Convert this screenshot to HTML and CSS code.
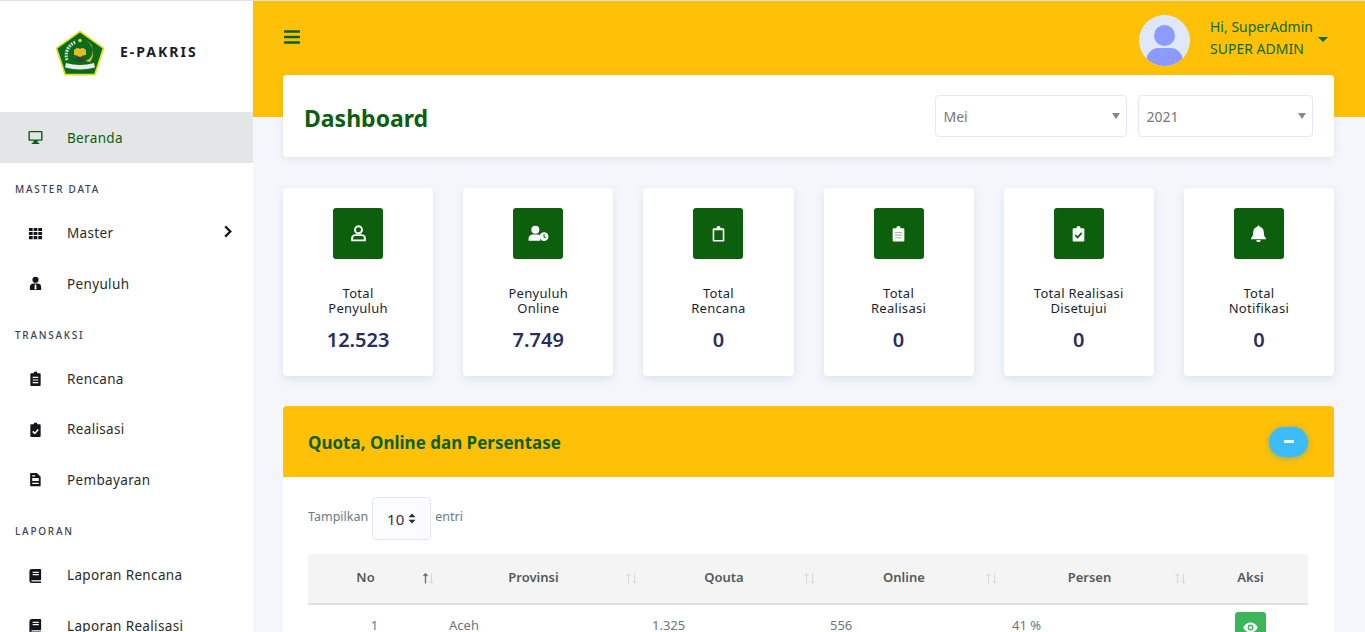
FILE: index.html
```html
<!DOCTYPE html>
<html lang="id">
<head>
<meta charset="utf-8">
<title>E-PAKRIS</title>
<link rel="stylesheet" href="styles.css">
</head>
<body>
<div class="app">
  <aside class="sidebar">
    <div class="brand">
      <svg class="logo" viewBox="0 0 50 46">
        <path d="M25 0.500 L49.500 18 L40.500 45.500 L9.500 45.500 L0.500 18 Z" fill="#e9dc20"/>
        <path d="M25 2.500 L47.500 18.600 L39.200 43.800 L10.800 43.800 L2.500 18.600 Z" fill="#0a6b1c"/>
        <path d="M31 10.500 A14.500 14.500 0 0 1 35 32 L30.500 31 A11 11 0 0 0 31 10.500 Z" fill="#d9bd2c"/>
        <circle cx="25" cy="10.500" r="1.800" fill="#e9dc20"/>
        <path d="M12 30 A14 14 0 0 1 21 12" fill="none" stroke="#cfe3d0" stroke-width="3.200" stroke-dasharray="1.800 1"/>
        <path d="M19 20 Q22 16.500 25 19 Q28 16.500 31 20 L31 25 Q27 25 25 28 Q23 25 19 25 Z" fill="#e8b92a"/>
        <path d="M19 30 L25 26.500 L31 30 L25 32 Z" fill="#2c4a32"/>
        <path d="M11 33 Q25 37 39 33 L40 37.500 Q25 41.500 10 37.500 Z" fill="#e6ece6"/>
      </svg>
      <span class="brand-name">E-PAKRIS</span>
    </div>
    <nav>
      <a class="item active">
        <svg class="ic" viewBox="0 0 16 16"><path d="M1.500 1h13a1 1 0 0 1 1 1v8.500a1 1 0 0 1-1 1h-13a1 1 0 0 1-1-1V2a1 1 0 0 1 1-1zm.5 1.500V10h12V2.500zM6 11.500h4l.5 2H12V15H4v-1.500h1.500z" fill="#0c5f0c" fill-rule="evenodd"/></svg>
        <span>Beranda</span>
      </a>
      <div class="section">MASTER DATA</div>
      <a class="item">
        <svg class="ic" viewBox="0 0 16 16"><path d="M1 2h4v3.400H1zM6 2h4v3.400H6zM11 2h4v3.400h-4zM1 6.300h4v3.400H1zM6 6.300h4v3.400H6zM11 6.300h4v3.400h-4zM1 10.600h4V14H1zM6 10.600h4V14H6zM11 10.600h4V14h-4z" fill="#14141c"/></svg>
        <span>Master</span>
        <svg class="chev" viewBox="0 0 10 14"><path d="M2 1.500 L7.500 7 L2 12.500" fill="none" stroke="#14141c" stroke-width="2.400"/></svg>
      </a>
      <a class="item">
        <svg class="ic" viewBox="0 0 16 16"><circle cx="8" cy="4" r="3.300" fill="#14141c"/><path d="M2 15v-3a4 4 0 0 1 4-4h4a4 4 0 0 1 4 4v3zM7.300 9l-.5 5h2.400l-.5-5z" fill="#14141c" fill-rule="evenodd"/></svg>
        <span>Penyuluh</span>
      </a>
      <div class="section">TRANSAKSI</div>
      <a class="item">
        <svg class="ic" viewBox="0 0 16 16"><path d="M3.500 2.500H6a2 2 0 0 1 4 0h2.500a1 1 0 0 1 1 1V15a1 1 0 0 1-1 1h-9a1 1 0 0 1-1-1V3.500a1 1 0 0 1 1-1zM5 6.200v1.200h6V6.200zM5 9v1.200h6V9zM5 11.800V13h6v-1.200z" fill="#14141c" fill-rule="evenodd"/></svg>
        <span>Rencana</span>
      </a>
      <a class="item">
        <svg class="ic" viewBox="0 0 16 16"><path d="M3.500 2.500H6a2 2 0 0 1 4 0h2.500a1 1 0 0 1 1 1V15a1 1 0 0 1-1 1h-9a1 1 0 0 1-1-1V3.500a1 1 0 0 1 1-1z" fill="#14141c"/><path d="M5 10l2.200 2.200L11 8" fill="none" stroke="#fff" stroke-width="1.700"/></svg>
        <span>Realisasi</span>
      </a>
      <a class="item">
        <svg class="ic" viewBox="0 0 16 16"><path d="M3 1h6.500L13.500 5v9.500a.7.700 0 0 1-.7.7H3a.7.700 0 0 1-.7-.7V1.700A.7.700 0 0 1 3 1zM4.500 3.500v1.200h3V3.500zM4.500 6.500v3.200h7V6.500zM4.500 11.500v1.400h7v-1.400z" fill="#14141c" fill-rule="evenodd"/></svg>
        <span>Pembayaran</span>
      </a>
      <div class="section">LAPORAN</div>
      <a class="item">
        <svg class="ic" viewBox="0 0 16 16"><path d="M4 1h9a1 1 0 0 1 1 1v10a1 1 0 0 1-1 1H4a.9.900 0 0 0 0 1.500h10V16H4a2.500 2.500 0 0 1-2.500-2.500v-10A2.500 2.500 0 0 1 4 1zM5 4v1.200h6.500V4zM5 6.500v1.200h6.500V6.500z" fill="#14141c" fill-rule="evenodd"/></svg>
        <span>Laporan Rencana</span>
      </a>
      <a class="item">
        <svg class="ic" viewBox="0 0 16 16"><path d="M4 1h9a1 1 0 0 1 1 1v10a1 1 0 0 1-1 1H4a.9.900 0 0 0 0 1.500h10V16H4a2.500 2.500 0 0 1-2.500-2.500v-10A2.500 2.500 0 0 1 4 1zM5 4v1.200h6.500V4zM5 6.500v1.200h6.500V6.500z" fill="#14141c" fill-rule="evenodd"/></svg>
        <span>Laporan Realisasi</span>
      </a>
    </nav>
  </aside>

  <main class="main">
    <header class="topbar">
      <svg class="burger" viewBox="0 0 16 14"><path d="M1 1.500h14M1 7h14M1 12.500h14" stroke="#0c5f0c" stroke-width="2.600" stroke-linecap="round"/></svg>
      <div class="user">
        <svg class="avatar" viewBox="0 0 51 51">
          <circle cx="25.500" cy="25.500" r="25.500" fill="#dfe8fb"/>
          <circle cx="25.500" cy="20.500" r="10.500" fill="#8b9bff"/>
          <path d="M7.500 43.500 A12 12 0 0 1 19 33 H32 A12 12 0 0 1 43.500 43.500 A25.500 25.500 0 0 1 7.500 43.500 Z" fill="#8b9bff"/>
        </svg>
        <div class="user-text">
          <div>Hi, SuperAdmin</div>
          <div>SUPER ADMIN</div>
        </div>
        <span class="caret"></span>
      </div>
    </header>

    <section class="title-card">
      <h1>Dashboard</h1>
      <div class="filters">
        <div class="fake-select month">Mei<span class="sel-arrow"></span></div>
        <div class="fake-select year">2021<span class="sel-arrow"></span></div>
      </div>
    </section>

    <section class="stats">
      <article class="stat">
        <div class="stat-icon"><svg viewBox="0 0 16 16"><circle cx="8" cy="4.500" r="3.300" fill="none" stroke="#fff" stroke-width="1.800"/><path d="M2 14.500v-2a3 3 0 0 1 3-3h6a3 3 0 0 1 3 3v2z" fill="none" stroke="#fff" stroke-width="1.800"/></svg></div>
        <div class="stat-label">Total<br>Penyuluh</div>
        <div class="stat-value">12.523</div>
      </article>
      <article class="stat">
        <div class="stat-icon"><svg class="wide" viewBox="0 0 20 16"><circle cx="7" cy="4.500" r="3.800" fill="#fff"/><path d="M0.500 15v-2a4 4 0 0 1 4-4h5a4 4 0 0 1 2.500 1A5 5 0 0 0 11.800 15z" fill="#fff"/><circle cx="15.300" cy="11" r="4.200" fill="#fff"/><path d="M15.300 8.800V11.200L17 12" stroke="#0c5f0c" stroke-width="1" fill="none"/></svg></div>
        <div class="stat-label">Penyuluh<br>Online</div>
        <div class="stat-value">7.749</div>
      </article>
      <article class="stat">
        <div class="stat-icon"><svg viewBox="0 0 16 16"><path d="M3.500 3H6a2 2 0 0 1 4 0h2.500a1 1 0 0 1 1 1v10.500a1 1 0 0 1-1 1h-9a1 1 0 0 1-1-1V4a1 1 0 0 1 1-1zM4 5v9h8V5z" fill="#fff" fill-rule="evenodd"/></svg></div>
        <div class="stat-label">Total<br>Rencana</div>
        <div class="stat-value">0</div>
      </article>
      <article class="stat">
        <div class="stat-icon"><svg viewBox="0 0 16 16"><path d="M3.500 3H6a2 2 0 0 1 4 0h2.500a1 1 0 0 1 1 1v10.500a1 1 0 0 1-1 1h-9a1 1 0 0 1-1-1V4a1 1 0 0 1 1-1z" fill="#fff"/><path d="M4.500 7h7M4.500 9.500h7M4.500 12h7" stroke="#9cc09c" stroke-width="1"/></svg></div>
        <div class="stat-label">Total<br>Realisasi</div>
        <div class="stat-value">0</div>
      </article>
      <article class="stat">
        <div class="stat-icon"><svg viewBox="0 0 16 16"><path d="M3.500 3H6a2 2 0 0 1 4 0h2.500a1 1 0 0 1 1 1v10.500a1 1 0 0 1-1 1h-9a1 1 0 0 1-1-1V4a1 1 0 0 1 1-1z" fill="#fff"/><path d="M5 9.500l2.200 2.200L11 7.500" fill="none" stroke="#0c5f0c" stroke-width="1.700"/></svg></div>
        <div class="stat-label">Total Realisasi<br>Disetujui</div>
        <div class="stat-value">0</div>
      </article>
      <article class="stat">
        <div class="stat-icon"><svg viewBox="0 0 16 16"><path d="M8 .5a1.100 1.100 0 0 1 1.100 1.200C11.500 2.200 13 4.200 13 7c0 3 .8 4 2 5.300v1H1v-1C2.200 11 3 10 3 7c0-2.800 1.500-4.800 3.900-5.300A1.100 1.100 0 0 1 8 .5zM6 14.200h4a2 2 0 0 1-4 0z" fill="#fff"/></svg></div>
        <div class="stat-label">Total<br>Notifikasi</div>
        <div class="stat-value">0</div>
      </article>
    </section>

    <section class="panel">
      <div class="panel-head">
        <h2>Quota, Online dan Persentase</h2>
        <button class="collapse" type="button"><span class="minus"></span></button>
      </div>
      <div class="panel-body">
        <div class="length">
          <span>Tampilkan</span>
          <div class="len-select">10
            <svg viewBox="0 0 10 14"><path d="M5 .5 9.500 5.500H.5zM5 13.500.5 8.500h9z" fill="#2a2d35"/></svg>
          </div>
          <span>entri</span>
        </div>
        <table>
          <thead>
            <tr>
              <th class="c-no">No<svg class="sort on" viewBox="0 0 13 11"><path class="up" d="M3.500 10.500V1M1.500 3 3.500 .8 5.500 3"/><path d="M9.500 .5V10M7.500 8 9.500 10.200 11.500 8"/></svg></th>
              <th class="c-prov">Provinsi<svg class="sort" viewBox="0 0 13 11"><path d="M3.500 10.500V1M1.500 3 3.500 .8 5.500 3"/><path d="M9.500 .5V10M7.500 8 9.500 10.200 11.500 8"/></svg></th>
              <th class="c-quota">Qouta<svg class="sort" viewBox="0 0 13 11"><path d="M3.500 10.500V1M1.500 3 3.500 .8 5.500 3"/><path d="M9.500 .5V10M7.500 8 9.500 10.200 11.500 8"/></svg></th>
              <th class="c-online">Online<svg class="sort" viewBox="0 0 13 11"><path d="M3.500 10.500V1M1.500 3 3.500 .8 5.500 3"/><path d="M9.500 .5V10M7.500 8 9.500 10.200 11.500 8"/></svg></th>
              <th class="c-persen">Persen<svg class="sort" viewBox="0 0 13 11"><path d="M3.500 10.500V1M1.500 3 3.500 .8 5.500 3"/><path d="M9.500 .5V10M7.500 8 9.500 10.200 11.500 8"/></svg></th>
              <th class="c-aksi">Aksi</th>
            </tr>
          </thead>
          <tbody>
            <tr>
              <td class="center">1</td>
              <td>Aceh</td>
              <td>1.325</td>
              <td>556</td>
              <td>41 %</td>
              <td class="center">
                <a class="eye"><svg viewBox="0 0 18 12"><path d="M9 0C5 0 2 2.500 .3 6 2 9.500 5 12 9 12s7-2.500 8.700-6C16 2.500 13 0 9 0zm0 2.500a3.500 3.500 0 1 1 0 7 3.500 3.500 0 0 1 0-7z" fill="#fff" fill-rule="evenodd"/><circle cx="9" cy="6" r="1.800" fill="#fff"/></svg></a>
              </td>
            </tr>
          </tbody>
        </table>
      </div>
    </section>
  </main>
</div>
</body>
</html>
```
FILE: styles.css
```css
* { box-sizing: border-box; }
html, body { margin: 0; height: 632px; overflow: hidden; }
body {
  font-family: "Noto Sans", "Open Sans", sans-serif;
  background: #f4f6fb;
  color: #212529;
  border-top: 1px solid #dfe1e5;
}
.app { display: flex; height: 631px; overflow: hidden; }

.sidebar { width: 253px; flex: none; background: #fff; }
.brand { height: 111px; display: flex; align-items: center; padding: 0 0 8px 55px; }
.logo { width: 50px; height: 46px; }
.brand-name { margin-left: 15px; font-size: 14px; font-weight: 700; letter-spacing: 2px; color: #1a1c2e; margin-top: -2px; }

.item { display: flex; align-items: center; height: 50.400px; padding-left: 28px; font-size: 13.500px; letter-spacing: .35px; color: #2b2b2b; }
.item span { margin-left: 24px; }
.item.active { background: #e4e5e6; color: #0c5f0c; height: 51px; }
.ic { width: 15px; height: 15px; flex: none; }
.chev { width: 10px; height: 13px; margin-left: auto; margin-right: 20px; margin-top: -3px; }
.section { height: 45px; padding: 20px 0 0 15px; font-size: 10px; line-height: 12px; font-weight: 500; letter-spacing: 1.750px; color: #3c3f58; }

.main { flex: 1; min-width: 0; position: relative; }
.topbar { height: 116px; background: #ffc107; padding: 0 30px 0 31px; margin-bottom: -42px; display: flex; justify-content: space-between; align-items: flex-start; }
.burger { width: 16px; height: 14px; margin-top: 29px; }
.user { display: flex; align-items: flex-start; margin-top: 14px; color: #0c6a0c; font-size: 14px; }
.avatar { width: 51px; height: 51px; }
.user-text { margin-left: 20px; line-height: 21.500px; margin-top: 1px; width: 108px; white-space: nowrap; }
.caret { margin: 22px 7px 0 0; border: 5px solid transparent; border-top-color: #0c6a0c; border-bottom: 0; }

.title-card { margin: 0 31.500px 0 30px; height: 82px; background: #fff; border-radius: 4px; box-shadow: 0 2px 8px rgba(70,80,120,.1); display: flex; justify-content: space-between; align-items: center; padding: 0 21px 0 21px; position: relative; }
h1 { margin: 3px 0 0; font-size: 23px; font-weight: 700; color: #0c5f0c; }
.filters { display: flex; gap: 11px; }
.fake-select { height: 42px; border: 1px solid #e3e6fb; border-radius: 4px; display: flex; align-items: center; padding-left: 8px; font-size: 14px; color: #777; position: relative; background: #fff; }
.month { width: 192px; }
.year { width: 175px; }
.sel-arrow { margin-left: auto; margin-right: 6px; border: 5px solid transparent; border-top: 6px solid #888; border-bottom: 0; border-left-width: 4px; border-right-width: 4px; }

.stats { display: grid; grid-template-columns: repeat(6, 1fr); gap: 30px; margin: 31px 31px 30px 30px; }
.stat { height: 188px; background: #fff; border-radius: 4px; box-shadow: 0 3px 8px rgba(70,80,120,.12); display: flex; flex-direction: column; align-items: center; padding-top: 20px; }
.stat-icon { width: 50px; height: 51px; background: #0c5f0c; border-radius: 3px; display: flex; align-items: center; justify-content: center; }
.stat-icon svg { width: 17px; height: 17px; }
.stat-icon svg.wide { width: 21px; height: 17px; }
.stat-label { margin-top: 26.700px; font-size: 13px; line-height: 15.500px; letter-spacing: .3px; text-align: center; color: #1c1f33; white-space: nowrap; }
.stat-value { margin-top: 9.200px; font-size: 20px; line-height: 28px; font-weight: 600; color: #2a2f5b; }

.panel { margin: 0 31.500px 0 30px; background: #fff; border-radius: 4px 4px 0 0; }
.panel-head { height: 71px; background: #ffc107; border-radius: 4px 4px 0 0; display: flex; justify-content: space-between; align-items: center; padding: 0 25.500px 0 25px; }
h2 { margin: 2px 0 0; font-size: 17px; font-weight: 700; color: #0c5f0c; }
.collapse { width: 39px; height: 30px; border: 0; border-radius: 15px; background: #3bbcf8; box-shadow: 0 1px 6px rgba(60,160,210,.6); display: flex; align-items: center; justify-content: center; padding: 0; }
.minus { width: 10px; height: 3px; background: #fff; border-radius: 1px; }
.panel-body { padding: 20px 25px 0; }
.length { display: flex; align-items: center; gap: 4px; font-size: 12.500px; color: #6c7a89; height: 43px; margin-bottom: 14px; }
.length span { margin-top: -4px; }
.len-select { width: 59px; height: 43px; border: 1px solid #e3e6fb; border-radius: 4px; background: #fcfcff; display: flex; align-items: center; justify-content: center; gap: 4px; font-size: 15px; color: #333; }
.len-select svg { width: 8px; height: 11px; }

table { width: 1000px; border-collapse: collapse; table-layout: fixed; font-size: 13px; }
th { height: 50px; background: #f4f4f4; border-bottom: 2px solid #dee0e2; text-align: center; font-weight: 600; color: #55595c; padding: 0 26px 4px 8px; position: relative; }
.c-no { width: 133px; }
.c-prov { width: 203px; }
.c-quota { width: 178px; }
.c-online { width: 182px; }
.c-persen { width: 189px; }
.c-aksi { padding-right: 8px; }
.sort { position: absolute; right: 6px; top: 19px; width: 13px; height: 11px; fill: none; stroke: #d6d8da; stroke-width: 1; }
.sort.on .up { stroke: #5f7382; stroke-width: 1.300; }
td { padding: 11px 8px; color: #6c757d; vertical-align: top; line-height: 18px; }
td.center { text-align: center; }
.eye { display: inline-flex; width: 31px; height: 30px; background: #3cb55b; border-radius: 3px; align-items: center; justify-content: center; margin-top: -4px; }
.eye svg { width: 15px; height: 11px; }
```
